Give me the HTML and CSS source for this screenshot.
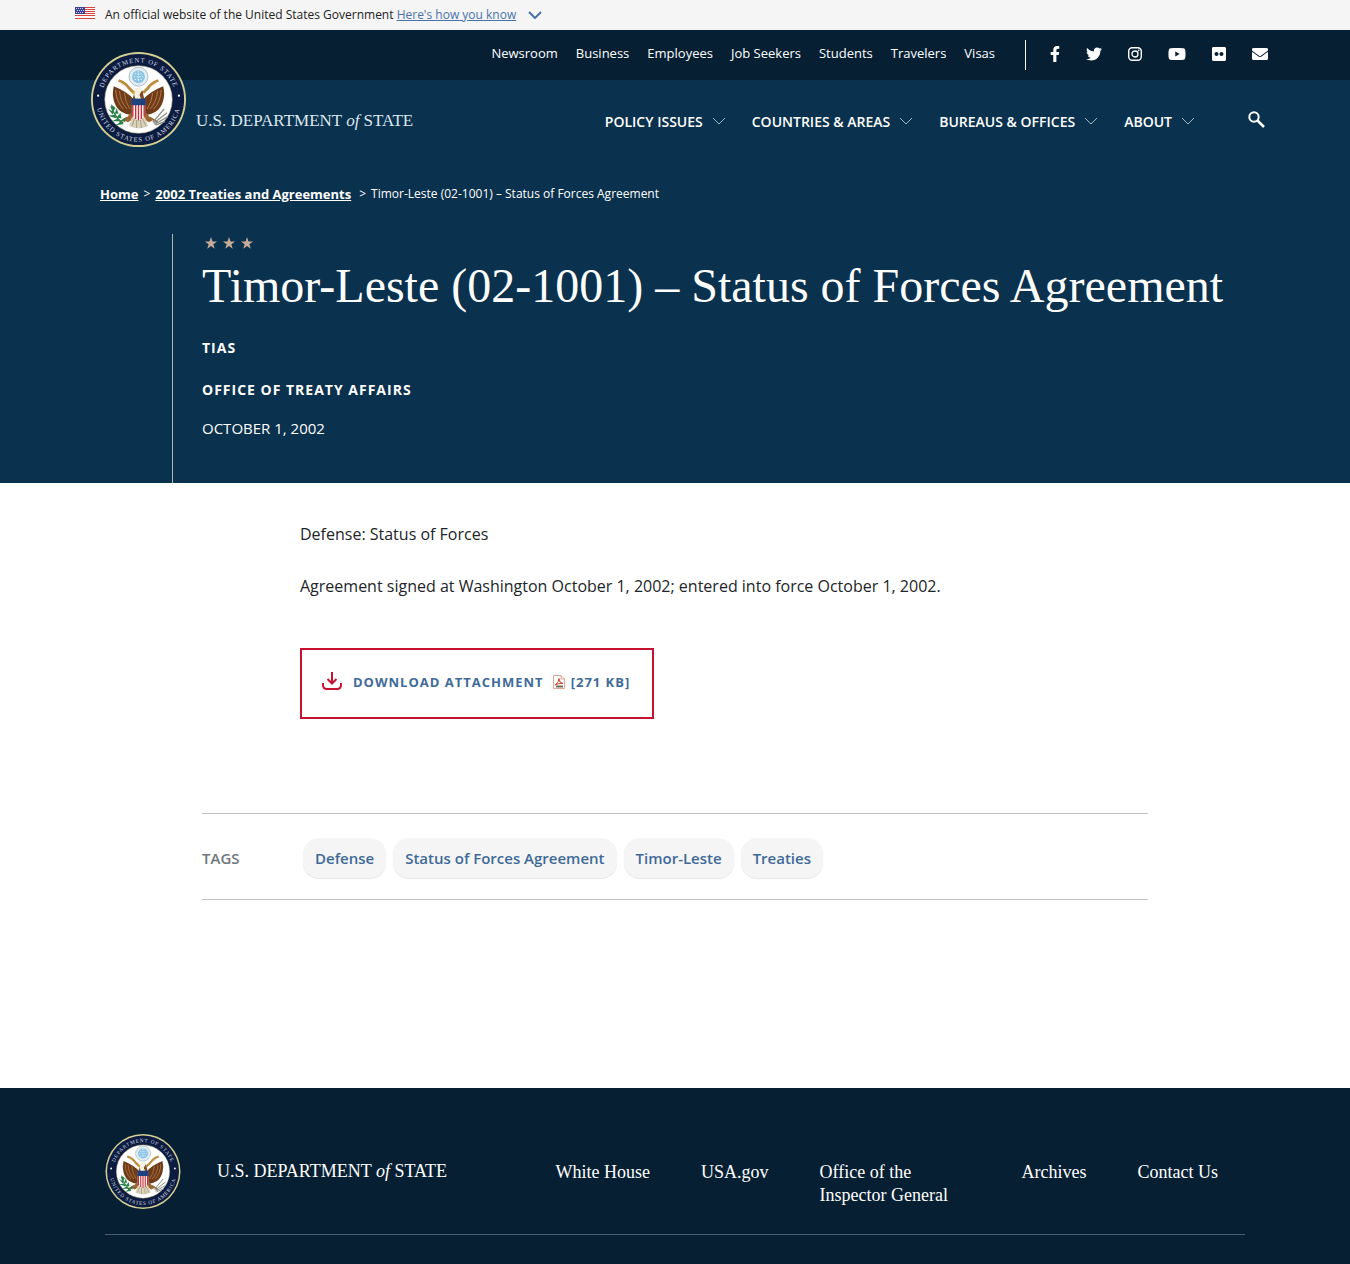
FILE: index.html
```html
<!DOCTYPE html>
<html lang="en">
<head>
<meta charset="utf-8">
<meta name="viewport" content="width=device-width, initial-scale=1">
<title>Timor-Leste (02-1001) – Status of Forces Agreement - United States Department of State</title>
<link rel="stylesheet" href="styles.css">
</head>
<body>
<svg class="defs" aria-hidden="true">
  <symbol id="chevron" viewBox="0 0 14 8"><path d="M1 1l6 6 6-6" fill="none" stroke="currentColor"/></symbol>
  <symbol id="star" viewBox="0 0 24 24"><path fill="currentColor" d="M12 0l3 9h9l-7.300 5.500 2.800 9L12 18l-7.500 5.500 2.800-9L0 9h9z"/></symbol>
</svg>

<div class="gov-banner">
  <div class="wrap gov-inner">
    <svg class="flag" viewBox="0 0 20 12" aria-hidden="true">
      <path fill="#fff" d="M0 0h20v12H0z"/>
      <path stroke="#dc4440" d="M0 .5h20M0 2.500h20M0 4.500h20M0 6.500h20M0 8.500h20M0 11.500h20"/>
      <path fill="#3b449c" d="M0 0h10v7H0z"/>
      <path stroke="#c9cdea" stroke-dasharray="1 1" d="M1 1.500h8M2 3.500h8M1 5.500h8"/>
    </svg>
    <p>An official website of the United States Government <a href="#official">Here's how you know</a></p>
    <svg class="gov-chevron" aria-hidden="true"><use href="#chevron"/></svg>
  </div>
</div>

<header class="site-header">
  <div class="wrap header-grid">
    <a class="brand" href="#home">
      <svg class="seal" viewBox="0 0 100 100" role="img" aria-label="Department of State seal">
        <g id="seal">
          <circle cx="50" cy="50" r="50" fill="#d5cf93"/>
          <circle cx="50" cy="50" r="48" fill="#0b1c40"/>
          <circle cx="50" cy="50" r="35.500" fill="#fff" stroke="#b9b487" stroke-width=".6"/>
          <path id="arc-top" d="M11 50a39 39 0 0 1 78 0" fill="none"/>
          <path id="arc-bottom" d="M5.500 50a44.500 44.500 0 0 0 89 0" fill="none"/>
          <text class="seal-text"><textPath href="#arc-top" startOffset="50%">DEPARTMENT OF STATE</textPath></text>
          <text class="seal-text"><textPath href="#arc-bottom" startOffset="50%">UNITED STATES OF AMERICA</textPath></text>
          <circle cx="7.500" cy="46" r="1.200" fill="#fff"/><circle cx="92.500" cy="46" r="1.200" fill="#fff"/>
          <circle cx="50" cy="26" r="10" fill="#e3ecef" stroke="#a9bfca" stroke-width="1"/>
          <circle cx="50" cy="26" r="6.800" fill="#8dc5e6"/>
          <path d="M46 23h8M45 26h10M46 29h8M50 20v12" stroke="#e2f3fb" stroke-width="1" stroke-dasharray="1.500 1.500"/>
          <path d="M29 30q7 2 11 8l5 5M71 30q-7 2-11 8l-5 5" fill="none" stroke="#b98b3d" stroke-width="3"/>
          <path d="M30 32l6 4M70 32l-6 4" stroke="#ead9a5" stroke-width="1"/>
          <path fill="#6f3c1b" d="M45 50Q39 42 24 36q-2 8 0 15 2 8 8 12 6 4 13 3zM55 50q6-8 21-14 2 8 0 15-2 8-8 12-6 4-13 3z"/>
          <path d="M26 40q1 13 8 20M30 41q1 12 8 19M35 43q1 10 6 17M74 40q-1 13-8 20M70 41q-1 12-8 19M65 43q-1 10-6 17" fill="none" stroke="#b77b42" stroke-width="1"/>
          <path fill="#a0642f" d="M42 64l-7 8 4 2 6-4zM58 64l7 8-4 2-6-4z"/>
          <path fill="#d9d3bd" d="M43 69h14l3 9q-10 5-20 0z"/>
          <path d="M43 78l3-8M48 80v-9M53 80l-1-9M58 78l-4-8" stroke="#a99a7b" stroke-width="1"/>
          <path d="M30 74l8-5M70 74l-8-5" stroke="#8a6a35" stroke-width="2"/>
          <path fill="#7d4a22" d="M45 45q0-6 5-7 5 1 5 7l2 8H43z"/>
          <path fill="#f5f1e2" d="M45 44q0-7 5-7 3 0 4 3l-3 5 2 5h-6z"/>
          <path fill="#dba838" d="M46 41l-4 2 4 2z"/>
          <path fill="#fff" d="M43 50h14v15q-1 5-7 7-6-2-7-7z"/>
          <path d="M44 55v13M47 55v15.500M50 55v17M53 55v15.500M56 55v13" stroke="#c3313a" stroke-width="1.500"/>
          <path fill="#20417f" d="M42.500 49h15v7h-15z"/>
          <path d="M34 75Q26 70 21 57" fill="none" stroke="#2e7a43" stroke-width="1.500"/>
          <path fill="#27824a" d="M21 55l5 4-3 4zM18 60l6 3-1 3zM18 67l7-1 2 4zM22 73l6-3 3 3zM27 59l2 6-4 0zM31 64l1 6-5-1zM26 77l6-4 2 3zM36 69l0 5-4-2z"/>
          <path d="M65 74l12-14M66 75l14-11M67 76l14-8M68 77l10-4" stroke="#8c8f86" stroke-width="1.300"/>
        </g>
      </svg>
      <span class="wordmark">U.S. DEPARTMENT <i>of</i> STATE</span>
    </a>
    <div class="utility">
      <nav class="utility-links" aria-label="Audiences">
        <a href="#newsroom">Newsroom</a><a href="#business">Business</a><a href="#employees">Employees</a><a href="#jobs">Job Seekers</a><a href="#students">Students</a><a href="#travelers">Travelers</a><a href="#visas">Visas</a>
      </nav>
      <div class="social">
        <a href="#facebook" aria-label="Facebook"><svg width="10" height="16" viewBox="0 0 320 512"><path d="M279.140 288l14.220-92.660h-88.910v-60.130c0-25.350 12.420-50.060 52.240-50.060h40.420V6.260S260.430 0 225.360 0c-73.220 0-121.080 44.380-121.080 124.720v70.620H22.890V288h81.390v224h100.170V288z"/></svg></a>
        <a href="#twitter" aria-label="Twitter"><svg width="16" height="16" viewBox="0 0 512 512"><path d="M459.370 151.716c.325 4.548.325 9.097.325 13.645 0 138.720-105.583 298.558-298.558 298.558-59.452 0-114.680-17.219-161.137-47.106 8.447.974 16.568 1.299 25.340 1.299 49.055 0 94.213-16.568 130.274-44.832-46.132-.975-84.792-31.188-98.112-72.772 6.498.974 12.995 1.624 19.818 1.624 9.421 0 18.843-1.300 27.614-3.573-48.081-9.747-84.143-51.980-84.143-102.985v-1.299c13.969 7.797 30.214 12.670 47.431 13.319-28.264-18.843-46.781-51.005-46.781-87.391 0-19.492 5.197-37.360 14.294-52.954 51.655 63.675 129.300 105.258 216.365 109.807-1.624-7.797-2.599-15.918-2.599-24.040 0-57.828 46.782-104.934 104.934-104.934 30.213 0 57.502 12.670 76.670 33.137 23.715-4.548 46.456-13.320 66.599-25.340-7.798 24.366-24.366 44.833-46.132 57.827 21.117-2.273 41.584-8.122 60.426-16.243-14.292 20.791-32.161 39.308-52.628 54.253z"/></svg></a>
        <a href="#instagram" aria-label="Instagram"><svg width="14" height="16" viewBox="0 0 14 16"><rect x=".7" y="1.700" width="12.600" height="12.600" rx="3.500" fill="none" stroke="currentColor" stroke-width="1.400"/><circle cx="7" cy="8" r="3" fill="none" stroke="currentColor" stroke-width="1.300"/><circle cx="10.700" cy="4.300" r=".9"/></svg></a>
        <a href="#youtube" aria-label="YouTube"><svg width="18" height="16" viewBox="0 0 576 512"><path d="M549.655 124.083c-6.281-23.650-24.787-42.276-48.284-48.597C458.781 64 288 64 288 64S117.220 64 74.629 75.486c-23.497 6.322-42.003 24.947-48.284 48.597-11.412 42.867-11.412 132.305-11.412 132.305s0 89.438 11.412 132.305c6.281 23.650 24.787 41.500 48.284 47.821C117.220 448 288 448 288 448s170.780 0 213.371-11.486c23.497-6.321 42.003-24.171 48.284-47.821 11.412-42.867 11.412-132.305 11.412-132.305s0-89.438-11.412-132.305zm-317.510 213.508V175.185l142.739 81.205-142.739 81.201z"/></svg></a>
        <a href="#flickr" aria-label="Flickr"><svg width="14" height="16" viewBox="0 0 448 512"><path fill-rule="evenodd" d="M400 32H48C21.500 32 0 53.500 0 80v352c0 26.500 21.500 48 48 48h352c26.500 0 48-21.500 48-48V80c0-26.500-21.500-48-48-48zM144.500 319c-35.100 0-63.500-28.400-63.500-63.500s28.400-63.500 63.500-63.500 63.500 28.400 63.500 63.500-28.400 63.500-63.500 63.500zm159 0c-35.100 0-63.500-28.400-63.500-63.500s28.400-63.500 63.500-63.500 63.500 28.400 63.500 63.500-28.400 63.500-63.500 63.500z"/></svg></a>
        <a href="#email" aria-label="Email"><svg width="16" height="16" viewBox="0 0 512 512"><path d="M502.300 190.800c3.900-3.100 9.700-.2 9.700 4.700V400c0 26.500-21.500 48-48 48H48c-26.500 0-48-21.500-48-48V195.600c0-5 5.700-7.800 9.700-4.700 22.400 17.400 52.100 39.500 154.100 113.600 21.100 15.400 56.700 47.800 92.200 47.600 35.700.3 72-32.800 92.300-47.600 102-74.100 131.600-96.300 154-113.700zM256 320c23.200.4 56.600-29.200 73.400-41.400 132.700-96.300 142.800-104.700 173.400-128.700 5.800-4.500 9.200-11.500 9.200-18.900v-19c0-26.500-21.500-48-48-48H48c-26.500 0-48 21.500-48 48v19c0 7.400 3.400 14.300 9.200 18.900 30.600 23.900 40.700 32.400 173.400 128.700 16.800 12.200 50.200 41.800 73.400 41.400z"/></svg></a>
      </div>
    </div>
    <div class="main-bar">
      <nav class="main-nav" aria-label="Main">
        <button type="button">POLICY ISSUES<svg aria-hidden="true"><use href="#chevron"/></svg></button>
        <button type="button">COUNTRIES &amp; AREAS<svg aria-hidden="true"><use href="#chevron"/></svg></button>
        <button type="button">BUREAUS &amp; OFFICES<svg aria-hidden="true"><use href="#chevron"/></svg></button>
        <button type="button">ABOUT<svg aria-hidden="true"><use href="#chevron"/></svg></button>
      </nav>
      <button class="search" type="button" aria-label="Search"><svg width="17" height="17" viewBox="0 0 17 17"><circle cx="6" cy="6" r="4.700" fill="none" stroke="currentColor" stroke-width="2"/><path d="M9.500 9.500l6.500 6.500" stroke="currentColor" stroke-width="2.500"/></svg></button>
    </div>
  </div>
</header>

<main>
  <section class="hero">
    <nav class="breadcrumbs" aria-label="Breadcrumb"><a href="#home">Home</a><span>&gt;</span><a href="#treaties">2002 Treaties and Agreements</a><span class="last-sep">&gt;</span><span>Timor-Leste (02-1001) – Status of Forces Agreement</span></nav>
    <div class="hero-body">
      <div class="stars" aria-hidden="true"><svg><use href="#star"/></svg><svg><use href="#star"/></svg><svg><use href="#star"/></svg></div>
      <h1>Timor-Leste (02-1001) – Status of Forces Agreement</h1>
      <p class="kicker">TIAS</p>
      <p class="kicker">OFFICE OF TREATY AFFAIRS</p>
      <p class="date">OCTOBER 1, 2002</p>
    </div>
  </section>

  <article class="entry">
    <p>Defense: Status of Forces</p>
    <p>Agreement signed at Washington October 1, 2002; entered into force October 1, 2002.</p>
    <a class="download" href="#attachment">
      <svg class="download-icon" viewBox="0 0 20 18" aria-hidden="true"><path d="M10 0v11M5.500 7L10 11.500 14.500 7M1 11v2q0 4 4 4h10q4 0 4-4v-2" fill="none" stroke="#c4122f" stroke-width="2"/></svg>
      <span class="download-label">DOWNLOAD ATTACHMENT</span>
      <svg width="12" height="14" viewBox="0 0 12 14" aria-hidden="true"><path d="M.5.500H8l3.500 3.500v9.500H.5zM8 .5V4h3.500" fill="#fff" stroke="#e3a595"/><path d="M2 10q4-2 4-6.500Q6 8 10 8.500 5 8 2 10z" fill="none" stroke="#d8452f"/><path d="M3 11.500h7" stroke="#746b4c" stroke-width="2"/></svg>
      <span class="download-size">[271 KB]</span>
    </a>
  </article>

  <section class="tags">
    <h2>TAGS</h2>
    <ul>
      <li><a href="#defense">Defense</a></li>
      <li><a href="#sofa">Status of Forces Agreement</a></li>
      <li><a href="#timor-leste">Timor-Leste</a></li>
      <li><a href="#treaties-tag">Treaties</a></li>
    </ul>
  </section>
</main>

<footer class="site-footer">
  <div class="footer-inner">
    <a class="footer-brand" href="#home">
      <svg class="footer-seal" viewBox="0 0 100 100" role="img" aria-label="Department of State seal"><use href="#seal"/></svg>
      <span>U.S. DEPARTMENT <i>of</i> STATE</span>
    </a>
    <nav class="footer-links" aria-label="Footer">
      <a href="#white-house">White House</a><a href="#usa">USA.gov</a><a class="oig" href="#oig">Office of the Inspector General</a><a href="#archives">Archives</a><a href="#contact">Contact Us</a>
    </nav>
  </div>
</footer>
</body>
</html>
```

FILE: styles.css
```css
* { box-sizing: border-box; }

body {
  margin: 0;
  background: #fff;
  color: #212529;
  font-family: "Open Sans", sans-serif;
  font-size: 16px;
}

p, h1, h2, ul { margin: 0; padding: 0; }
a { color: inherit; text-decoration: none; }
button { border: 0; padding: 0; background: none; color: inherit; font: inherit; }
svg { display: block; flex: none; }
i { font-style: italic; }

.defs { position: absolute; width: 0; height: 0; }
.seal-text { fill: #d3d9e3; font: 7px "Liberation Serif", serif; letter-spacing: 1px; text-anchor: middle; }
.wrap { max-width: 1200px; margin: 0 auto; }

/* Government banner */
.gov-banner { background: #f5f5f5; color: #222; font-size: 12px; line-height: 30px; }
.gov-inner { display: flex; align-items: center; }
.flag { width: 20px; height: 12px; margin: 0 10px 4px 0; }
.gov-banner a { color: #4773aa; text-decoration: underline; }
.gov-chevron { width: 14px; height: 8px; margin-left: 12px; color: #4773aa; stroke-width: 2px; }

/* Header */
.site-header {
  background: linear-gradient(#071f33 50px, #0a314d 50px);
  color: #fff;
}
.header-grid {
  display: grid;
  grid-template-columns: auto 1fr;
  grid-template-rows: 50px 82px;
  padding: 0 7px 0 16px;
}
.brand { grid-row: 1 / 3; display: flex; align-items: flex-start; padding-top: 22px; gap: 10px; }
.seal { width: 95px; height: 95px; }
.wordmark { padding-top: 58px; font: 17px/22px "Liberation Serif", serif; color: #dce8f0; }
.utility { display: flex; justify-content: flex-end; align-items: center; gap: 30px; font-size: 13px; }
.utility-links { display: flex; gap: 18px; padding-bottom: 4px; }
.social {
  display: flex;
  align-items: center;
  gap: 26px;
  height: 30px;
  padding: 0 0 2px 24px;
  border-left: 1px solid #fff;
}
.social svg { fill: currentColor; }
.main-bar { display: flex; justify-content: flex-end; align-items: center; gap: 53px; padding-right: 3px; }
.main-nav { display: flex; gap: 26px; }
.main-nav button { display: flex; align-items: center; gap: 9px; font-size: 14px; font-weight: 600; }
.main-nav svg { width: 14px; height: 8px; color: #9fb6c6; }
.search { padding-bottom: 4px; }

/* Title area */
.hero { background: #0a314d; color: #fff; padding: 20px 100px 0; }
.breadcrumbs { display: flex; gap: 5px; font-size: 12px; line-height: 24px; }
.breadcrumbs a { font-size: 13px; font-weight: 700; text-decoration: underline; }
.last-sep { padding-left: 3px; }
.hero-body {
  margin: 28px 0 0 72px;
  padding: 3px 0 44px 29px;
  border-left: 1px solid #b5b5ad;
}
.stars { display: flex; gap: 6px; padding-left: 3px; color: #c9ad98; }
.stars svg { width: 12px; height: 12px; }
h1 { margin: 7px 0 21px; font: 400 48px/60px "Liberation Serif", serif; }
.kicker { margin-bottom: 20px; font-size: 14px; line-height: 22px; font-weight: 700; letter-spacing: 1px; }
.date { margin-top: -4px; font-size: 15px; line-height: 22px; }

/* Article */
.entry { max-width: 946px; margin: 0 auto; padding: 38px 98px 94px; line-height: 26px; }
.entry p { margin-bottom: 26px; }
.download {
  display: inline-flex;
  align-items: center;
  margin-top: 23px;
  padding: 19px 22px 22px 20px;
  border: 2px solid #c4122f;
  color: #3f6b98;
  font-size: 13px;
  font-weight: 700;
  letter-spacing: 1px;
}
.download-icon { width: 20px; height: 18px; margin-bottom: 3px; }
.download-label { margin: 0 9px 0 11px; }
.download-size { margin-left: 6px; }

/* Tags */
.tags {
  display: grid;
  grid-template-columns: 101px 1fr;
  align-items: center;
  max-width: 946px;
  margin: 0 auto 188px;
  padding: 24px 0 21px;
  border: solid #c2c2c2;
  border-width: 1px 0;
}
.tags h2 { color: #71767a; font-size: 15px; font-weight: 600; }
.tags ul { display: flex; flex-wrap: wrap; gap: 7px; list-style: none; }
.tags a {
  display: block;
  padding: 0 12px;
  border-radius: 16px;
  background: #f5f5f5;
  box-shadow: 0 1px 1px #e6e6e6;
  color: #3e6a99;
  font-size: 15px;
  font-weight: 600;
  line-height: 40px;
}

/* Footer */
.site-footer { display: flow-root; background: #071f33; color: #fff; font: 18px/23px "Liberation Serif", serif; }
.footer-inner {
  display: flex;
  align-items: center;
  justify-content: space-between;
  max-width: 1140px;
  margin: 0 auto 29px;
  padding: 46px 27px 25px 0;
  border-bottom: 1px solid #456076;
}
.footer-brand { display: flex; align-items: center; gap: 36px; }
.footer-seal { width: 76px; height: 75px; }
.footer-links { display: flex; gap: 51px; padding-top: 24px; }
.oig { width: 151px; }
```
